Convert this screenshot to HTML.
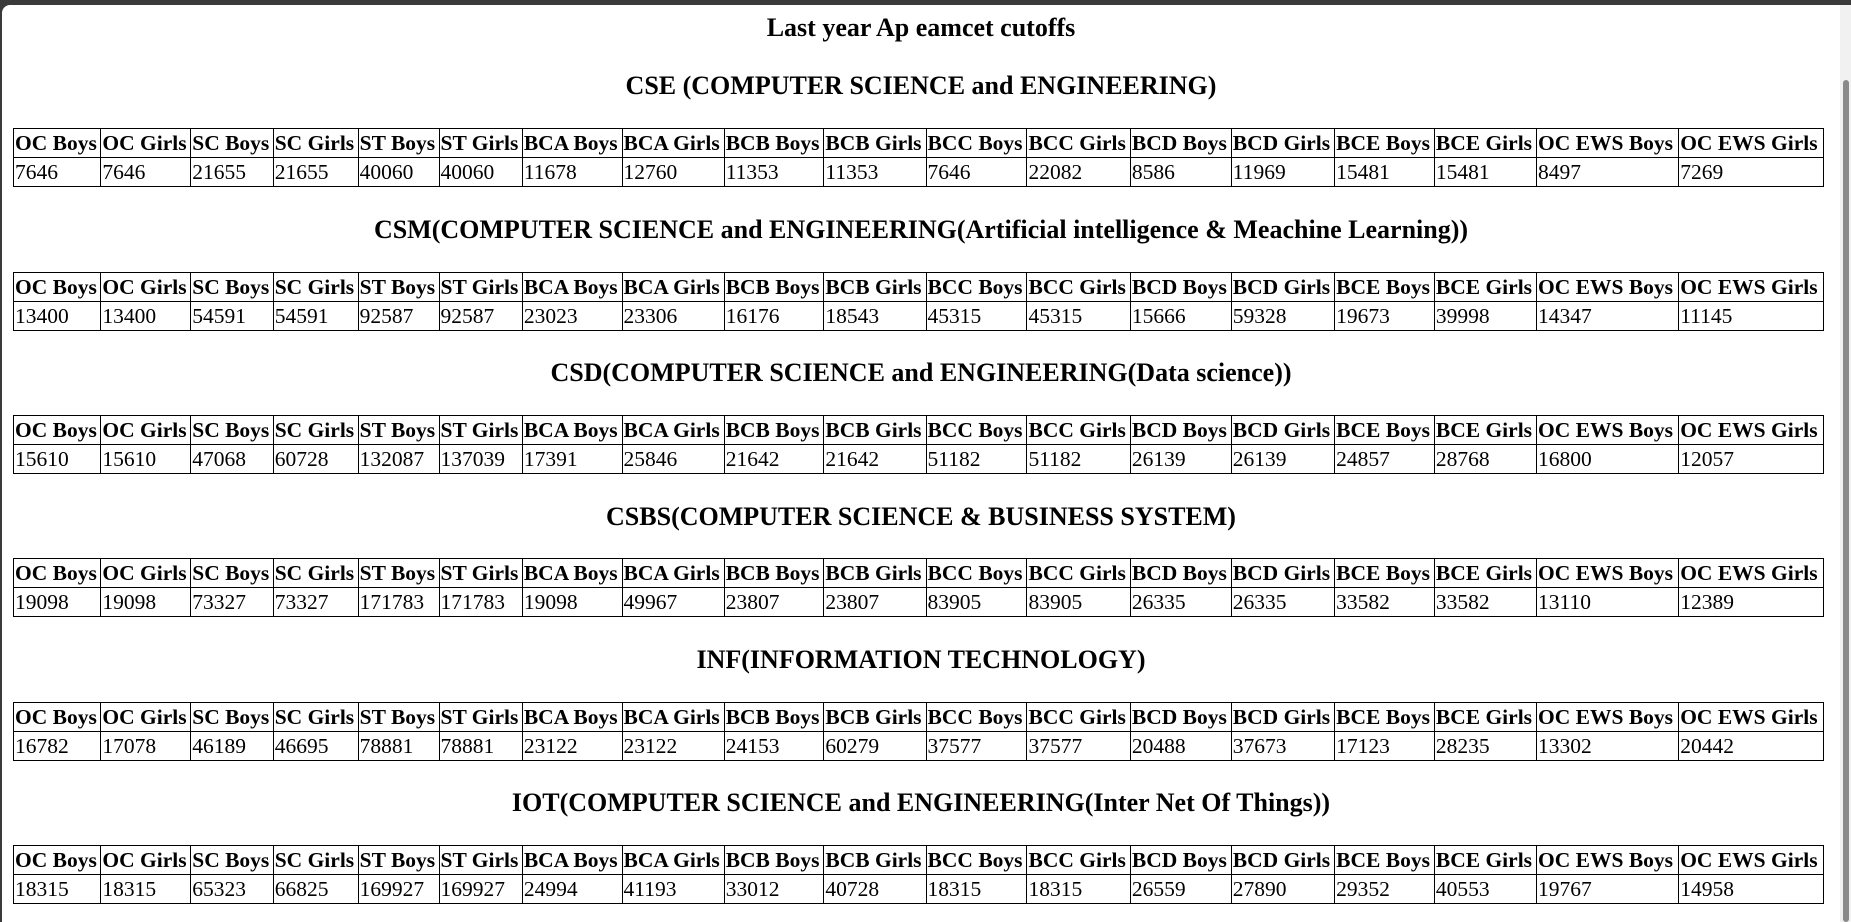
<!DOCTYPE html>
<html><head><meta charset="utf-8"><style>
html,body{margin:0;padding:0;background:#3a3a3a;width:1851px;height:922px;overflow:hidden;font-family:"Liberation Serif",serif;color:#000}
#page{position:absolute;left:2px;top:5px;width:1838px;height:917px;background:#fff;border-radius:8px 0 0 0;overflow:hidden}
#sb{position:absolute;left:1840px;top:5px;width:11px;height:917px;background:#f1f1f1}
#sb div{position:absolute;left:3px;top:75px;width:6px;height:842px;background:#8a8a8a;border-radius:3px}
.h{position:absolute;left:0;width:1838px;text-align:center;font-weight:bold;font-size:26px;line-height:30px}
table{position:absolute;left:11px;border-collapse:collapse;font-size:21.5px;width:1811px}
td,th{border:1px solid #000;padding:1px 1px;text-align:left;height:26px;white-space:nowrap;line-height:23px}
th{font-weight:bold}
</style></head><body>
<div id="page">
<div class="h" style="top:8px">Last year Ap eamcet cutoffs</div>
<div class="h" style="top:66px">CSE (COMPUTER SCIENCE and ENGINEERING)</div>
<table style="top:123px"><tr><th>OC Boys</th><th>OC Girls</th><th>SC Boys</th><th>SC Girls</th><th>ST Boys</th><th>ST Girls</th><th>BCA Boys</th><th>BCA Girls</th><th>BCB Boys</th><th>BCB Girls</th><th>BCC Boys</th><th>BCC Girls</th><th>BCD Boys</th><th>BCD Girls</th><th>BCE Boys</th><th>BCE Girls</th><th>OC EWS Boys</th><th>OC EWS Girls</th></tr>
<tr><td>7646</td><td>7646</td><td>21655</td><td>21655</td><td>40060</td><td>40060</td><td>11678</td><td>12760</td><td>11353</td><td>11353</td><td>7646</td><td>22082</td><td>8586</td><td>11969</td><td>15481</td><td>15481</td><td>8497</td><td>7269</td></tr></table>
<div class="h" style="top:210px">CSM(COMPUTER SCIENCE and ENGINEERING(Artificial intelligence &amp; Meachine Learning))</div>
<table style="top:267px"><tr><th>OC Boys</th><th>OC Girls</th><th>SC Boys</th><th>SC Girls</th><th>ST Boys</th><th>ST Girls</th><th>BCA Boys</th><th>BCA Girls</th><th>BCB Boys</th><th>BCB Girls</th><th>BCC Boys</th><th>BCC Girls</th><th>BCD Boys</th><th>BCD Girls</th><th>BCE Boys</th><th>BCE Girls</th><th>OC EWS Boys</th><th>OC EWS Girls</th></tr>
<tr><td>13400</td><td>13400</td><td>54591</td><td>54591</td><td>92587</td><td>92587</td><td>23023</td><td>23306</td><td>16176</td><td>18543</td><td>45315</td><td>45315</td><td>15666</td><td>59328</td><td>19673</td><td>39998</td><td>14347</td><td>11145</td></tr></table>
<div class="h" style="top:353px">CSD(COMPUTER SCIENCE and ENGINEERING(Data science))</div>
<table style="top:410px"><tr><th>OC Boys</th><th>OC Girls</th><th>SC Boys</th><th>SC Girls</th><th>ST Boys</th><th>ST Girls</th><th>BCA Boys</th><th>BCA Girls</th><th>BCB Boys</th><th>BCB Girls</th><th>BCC Boys</th><th>BCC Girls</th><th>BCD Boys</th><th>BCD Girls</th><th>BCE Boys</th><th>BCE Girls</th><th>OC EWS Boys</th><th>OC EWS Girls</th></tr>
<tr><td>15610</td><td>15610</td><td>47068</td><td>60728</td><td>132087</td><td>137039</td><td>17391</td><td>25846</td><td>21642</td><td>21642</td><td>51182</td><td>51182</td><td>26139</td><td>26139</td><td>24857</td><td>28768</td><td>16800</td><td>12057</td></tr></table>
<div class="h" style="top:497px">CSBS(COMPUTER SCIENCE &amp; BUSINESS SYSTEM)</div>
<table style="top:553px"><tr><th>OC Boys</th><th>OC Girls</th><th>SC Boys</th><th>SC Girls</th><th>ST Boys</th><th>ST Girls</th><th>BCA Boys</th><th>BCA Girls</th><th>BCB Boys</th><th>BCB Girls</th><th>BCC Boys</th><th>BCC Girls</th><th>BCD Boys</th><th>BCD Girls</th><th>BCE Boys</th><th>BCE Girls</th><th>OC EWS Boys</th><th>OC EWS Girls</th></tr>
<tr><td>19098</td><td>19098</td><td>73327</td><td>73327</td><td>171783</td><td>171783</td><td>19098</td><td>49967</td><td>23807</td><td>23807</td><td>83905</td><td>83905</td><td>26335</td><td>26335</td><td>33582</td><td>33582</td><td>13110</td><td>12389</td></tr></table>
<div class="h" style="top:640px">INF(INFORMATION TECHNOLOGY)</div>
<table style="top:697px"><tr><th>OC Boys</th><th>OC Girls</th><th>SC Boys</th><th>SC Girls</th><th>ST Boys</th><th>ST Girls</th><th>BCA Boys</th><th>BCA Girls</th><th>BCB Boys</th><th>BCB Girls</th><th>BCC Boys</th><th>BCC Girls</th><th>BCD Boys</th><th>BCD Girls</th><th>BCE Boys</th><th>BCE Girls</th><th>OC EWS Boys</th><th>OC EWS Girls</th></tr>
<tr><td>16782</td><td>17078</td><td>46189</td><td>46695</td><td>78881</td><td>78881</td><td>23122</td><td>23122</td><td>24153</td><td>60279</td><td>37577</td><td>37577</td><td>20488</td><td>37673</td><td>17123</td><td>28235</td><td>13302</td><td>20442</td></tr></table>
<div class="h" style="top:783px">IOT(COMPUTER SCIENCE and ENGINEERING(Inter Net Of Things))</div>
<table style="top:840px"><tr><th>OC Boys</th><th>OC Girls</th><th>SC Boys</th><th>SC Girls</th><th>ST Boys</th><th>ST Girls</th><th>BCA Boys</th><th>BCA Girls</th><th>BCB Boys</th><th>BCB Girls</th><th>BCC Boys</th><th>BCC Girls</th><th>BCD Boys</th><th>BCD Girls</th><th>BCE Boys</th><th>BCE Girls</th><th>OC EWS Boys</th><th>OC EWS Girls</th></tr>
<tr><td>18315</td><td>18315</td><td>65323</td><td>66825</td><td>169927</td><td>169927</td><td>24994</td><td>41193</td><td>33012</td><td>40728</td><td>18315</td><td>18315</td><td>26559</td><td>27890</td><td>29352</td><td>40553</td><td>19767</td><td>14958</td></tr></table>
</div>
<div id="sb"><div></div></div>
</body></html>
